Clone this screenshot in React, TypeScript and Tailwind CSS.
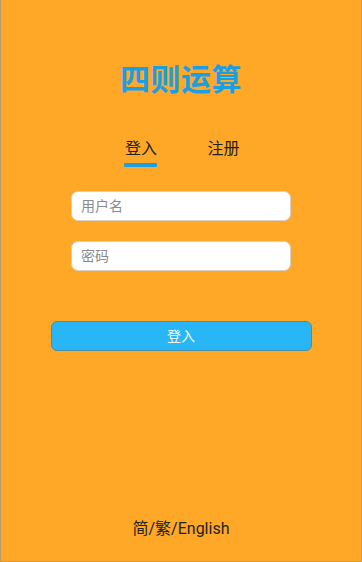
export default function App() {
  const font = { fontFamily: 'Roboto, "Noto Sans CJK SC", sans-serif' };
  return (
    <div
      style={font}
      className="h-[562px] w-full bg-[#ffa726] border-x border-b border-[#b99a72] flex flex-col items-center"
    >
      {/* Title */}
      <h1 className="mt-[60px] text-[30px] leading-[40px] font-bold text-[#1b9fe3] tracking-[0.5px]">
        四则运算
      </h1>

      {/* Tabs */}
      <div className="mt-[38px] ml-[2px] flex gap-[50px] text-[16px] leading-[22px] text-[#222]">
        <div className="flex flex-col items-center">
          <span>登入</span>
          <span className="mt-[3px] h-[4px] w-[33px] bg-[#1b9fe3] rounded-[1px]" />
        </div>
        <div className="flex flex-col items-center">
          <span>注册</span>
        </div>
      </div>

      {/* Inputs */}
      <div className="mt-[24px] flex flex-col gap-[20px]">
        <input
          placeholder="用户名"
          className="w-[220px] h-[30px] rounded-[7px] border border-[#d8d0c4] bg-white px-[9px] text-[14px] text-[#333] placeholder:text-[#8a8a8a] outline-none"
        />
        <input
          placeholder="密码"
          className="w-[220px] h-[30px] rounded-[7px] border border-[#d8d0c4] bg-white px-[9px] text-[14px] text-[#333] placeholder:text-[#8a8a8a] outline-none"
        />
      </div>

      {/* Submit */}
      <button className="mt-[50px] w-[261px] h-[30px] rounded-[6px] bg-[#29b6f6] border border-[#4a8fa8] text-white text-[14px]">
        登入
      </button>

      <div className="mt-auto mb-[21px] text-[16px] leading-[22px] text-[#222]">简/繁/English</div>
    </div>
  );
}
